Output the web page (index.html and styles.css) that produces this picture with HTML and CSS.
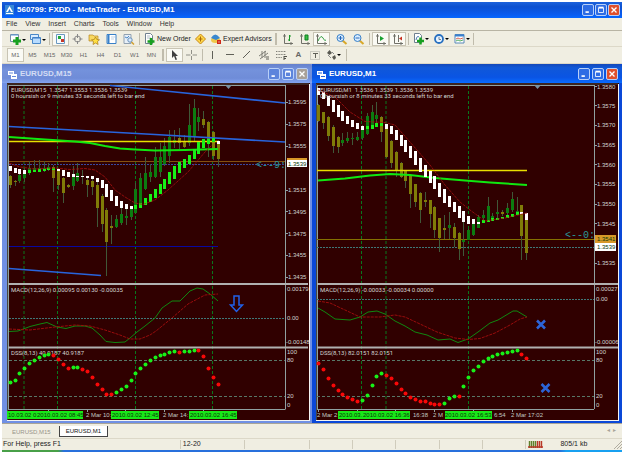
FILE: index.html
```html
<!DOCTYPE html>
<html lang="en">
<head>
<meta charset="utf-8">
<title>560799: FXDD - MetaTrader - EURUSD,M1</title>
<link rel="stylesheet" href="styles.css">
</head>
<body>
<div class="app">
  <header class="titlebar">
    <svg class="logo" viewBox="0 0 9 10"><path class="logo-bg" d="M0 0h9v10H0z"/><path d="M4.500 1L8 7H1z" fill="#fff"/><path d="M4.500 4L6 7H3z" fill="#2a78d8"/><path d="M1 8.500h7" stroke="#fff"/></svg>
    <h1>560799: FXDD - MetaTrader - EURUSD,M1</h1>
    <div class="winbtns">
      <button aria-label="Minimize"><svg viewBox="0 0 12 12"><path d="M3 8.500h4" stroke="#fff" stroke-width="2"/></svg></button>
      <button aria-label="Maximize"><svg viewBox="0 0 12 12"><path d="M3 3.500h6v5.500H3z" fill="none" stroke="#fff"/><path d="M3 3h6" stroke="#fff" stroke-width="2"/></svg></button>
      <button class="close" aria-label="Close"><svg viewBox="0 0 12 12"><path d="M3 3l6 6M9 3l-6 6" stroke="#fff" stroke-width="1.600"/></svg></button>
    </div>
  </header>
  <nav class="menu">
    <a href="#">File</a><a href="#">View</a><a href="#">Insert</a><a href="#">Charts</a><a href="#">Tools</a><a href="#">Window</a><a href="#">Help</a>
  </nav>
  <div class="toolbar">
    <button class="drop" aria-label="New chart"><svg viewBox="0 0 20 14"><path d="M3.500 2.500h8v7h-8z" fill="#fff" stroke="#7890a8"/><path d="M4 3h7" stroke="#5a9ad8"/><path d="M10 5v8M6 9h8" stroke="#18a020" stroke-width="3"/><path d="M15 7h4l-2 2z"/></svg></button>
    <button class="drop" aria-label="Profiles"><svg viewBox="0 0 20 14"><path d="M3.500 2.500h8v5h-8z" fill="#d8ecff" stroke="#4a88c8"/><path d="M5.500 5.500h8v6h-8z" fill="#b8dcff" stroke="#4a88c8"/><path d="M6 6h7" stroke="#3878c8"/><path d="M15 7h4l-2 2z"/></svg></button>
    <i class="sep"></i>
    <button class="on" aria-label="Market watch"><svg viewBox="0 0 17 14"><path d="M4.500 2.500h8v9h-8z" fill="#f4faff" stroke="#6a98c0"/><path d="M6 4h3v3H6z" fill="#20a838"/><path d="M9 7h3v3H9z" fill="#c83828"/></svg></button>
    <button aria-label="Data window"><svg viewBox="0 0 17 14"><circle cx="8.500" cy="7" r="3" fill="none" stroke="#888"/><path d="M8.500 2v10M3.500 7h10" stroke="#888"/><path d="M7 6h3v3H7z" fill="#f0eee2"/></svg></button>
    <button aria-label="Navigator"><svg viewBox="0 0 17 14"><path d="M3 3h4l1 1h4v5H3z" fill="#f8d860" stroke="#b88820" stroke-width=".7"/><path d="M9.500 5l1.300 2.500 2.700.3-2 1.800.6 2.900-2.600-1.500L7 12.500l.5-2.900-2-1.800 2.700-.3z" fill="#ffe040" stroke="#a87818" stroke-width=".7"/></svg></button>
    <button aria-label="Terminal"><svg viewBox="0 0 17 14"><path d="M4 2.500h9v9H4z" fill="#fff" stroke="#3880c8"/><path d="M5.500 3v8" stroke="#3880c8" stroke-width="2"/><path d="M8 5h4M8 7h3" stroke="#a8c0d8" stroke-width=".7"/></svg></button>
    <button aria-label="Strategy tester"><svg viewBox="0 0 17 14"><path d="M4 2.500h7v9H4z" fill="#e8f0f8" stroke="#90a0b0"/><path d="M5 5l2 1 2-2" fill="none" stroke="#4a88c8"/><circle cx="10" cy="8" r="2.200" fill="#d8eaff" stroke="#6890b8"/><path d="M11.500 10l2.500 2.500" stroke="#d0a030" stroke-width="1.500"/></svg></button>
    <i class="sep"></i>
    <button class="wide order"><svg viewBox="0 0 12 14"><path d="M2.500 1.500h5l2 2v8h-7z" fill="#fff" stroke="#708090"/><path d="M4 4h3M4 6h4" stroke="#90a0b0" stroke-width=".7"/><path d="M8 6v7M4.500 9.500h7" stroke="#18a020" stroke-width="2.500"/></svg>New Order</button>
    <button aria-label="MetaEditor"><svg viewBox="0 0 17 14"><path d="M8.500 2l5 5-5 5-5-5z" fill="#ffd848" stroke="#c88818"/><path d="M8.500 4.500v5M6.500 7h4" stroke="#a86808"/></svg></button>
    <button class="wide expert"><svg viewBox="0 0 12 14"><ellipse cx="5.500" cy="8" rx="4.500" ry="3" fill="#f0c848"/><path d="M1 6q4-7 9 0l-4 2z" fill="#3888d0"/><path d="M7 8h4v4H7z" fill="#d02818"/><path d="M8.500 9.500h1v1h-1z" fill="#fff"/></svg>Expert Advisors</button>
    <i class="sep grip"></i>
    <button aria-label="Bar chart"><svg viewBox="0 0 17 14"><path d="M5.500 2v9.500H14M4 4h3M12 10v3" fill="none" stroke="#707068"/><path d="M10.500 3v6M9 8h1.500M10.500 4H12" stroke="#189828" fill="none"/></svg></button>
    <button aria-label="Candlesticks"><svg viewBox="0 0 17 14"><path d="M5.500 2v9.500H14M4 4h3M12 10v3" fill="none" stroke="#707068"/><path d="M9 3h3v5H9z" fill="#38c048" stroke="#108020"/></svg></button>
    <button class="on" aria-label="Line chart"><svg viewBox="0 0 17 14"><path d="M4.500 2v9.500H14M3 4h3M12 10v3" fill="none" stroke="#707068"/><path d="M5 9q3-7 5-3t3 2" fill="none" stroke="#38a048"/></svg></button>
    <i class="gap"></i>
    <button aria-label="Zoom in"><svg viewBox="0 0 17 14"><path d="M9 8l4.500 4" stroke="#d8a828" stroke-width="2"/><circle cx="7.500" cy="6" r="3.500" fill="#d8ecff" stroke="#3880c8"/><path d="M7.500 4v4M5.500 6h4" stroke="#2868b8"/></svg></button>
    <button aria-label="Zoom out"><svg viewBox="0 0 17 14"><path d="M9 8l4.500 4" stroke="#d8a828" stroke-width="2"/><circle cx="7.500" cy="6" r="3.500" fill="#d8ecff" stroke="#3880c8"/><path d="M5.500 6h4" stroke="#2868b8"/></svg></button>
    <i class="sep"></i>
    <button class="on" aria-label="Auto scroll"><svg viewBox="0 0 17 14"><path d="M5.500 2v9.500H14M4 4h3M12 10v3" fill="none" stroke="#707068"/><path d="M8 4l4 2.500L8 9z" fill="#18a030"/></svg></button>
    <button class="on" aria-label="Chart shift"><svg viewBox="0 0 17 14"><path d="M5.500 2v9.500H14M4 4h3M12 10v3M9.500 3v7" fill="none" stroke="#707068"/><path d="M13 4.500L10 6.500l3 2z" fill="#c83020"/></svg></button>
    <i class="sep"></i>
    <button class="drop" aria-label="Indicators"><svg viewBox="0 0 20 14"><path d="M3.500 1.500h5l2 2v7h-7z" fill="#fff" stroke="#708090"/><path d="M5 8q1-5 3-3" fill="none" stroke="#4878b0"/><path d="M9.500 5.500v7M6 9h7" stroke="#18a020" stroke-width="2.500"/><path d="M14 6h4l-2 2z"/></svg></button>
    <button class="drop" aria-label="Periods"><svg viewBox="0 0 20 14"><circle cx="8" cy="7" r="4" fill="#e8f4ff" stroke="#2870c0" stroke-width="1.800"/><path d="M8 5v2.500h2" fill="none" stroke="#506880" stroke-width=".8"/><path d="M14 6h4l-2 2z"/></svg></button>
    <button class="drop" aria-label="Templates"><svg viewBox="0 0 20 14"><path d="M4 2.500h9v8.500H4z" fill="#fff" stroke="#5888b8"/><path d="M4 3.500h9" stroke="#3880d0" stroke-width="2"/><path d="M5 7l2-1 2 1 3-1" fill="none" stroke="#c83828" stroke-width=".8"/><path d="M5 9l2-1 2 1 3-1" fill="none" stroke="#289838" stroke-width=".8"/><path d="M15 6h4l-2 2z"/></svg></button>
    <i class="sep"></i>
  </div>
  <div class="toolbar periods">
    <button class="on">M1</button><button>M5</button><button>M15</button><button>M30</button><button>H1</button><button>H4</button><button>D1</button><button>W1</button><button>MN</button>
    <i class="sep grip"></i>
    <button class="on" aria-label="Cursor"><svg viewBox="0 0 17 14"><path d="M6 2v8l2-2 1.500 4 1.500-.6L9.600 8H12z" fill="#404040"/></svg></button>
    <button aria-label="Crosshair"><svg viewBox="0 0 17 14"><path d="M8.500 2v4M8.500 8v4M3 7h4.500M9.500 7H14" stroke="#909088"/></svg></button>
    <i class="sep"></i>
    <button aria-label="Vertical line"><svg viewBox="0 0 17 14"><path d="M7.500 3v8" stroke="#606058"/></svg></button>
    <button aria-label="Horizontal line"><svg viewBox="0 0 17 14"><path d="M4 6.500h8" stroke="#606058"/></svg></button>
    <button aria-label="Trendline"><svg viewBox="0 0 17 14"><path d="M4 10l7-7" stroke="#606058"/></svg></button>
    <button aria-label="Channel"><svg viewBox="0 0 17 14"><path d="M3 8l7-5M4 11l8-6M6 3v7M9 3v7" stroke="#808078"/><path d="M10 9h3M10 11h3" stroke="#606058"/></svg></button>
    <button aria-label="Fibonacci"><svg viewBox="0 0 17 14"><path d="M3 3.500h10M3 6.500h10M3 9.500h6" stroke="#808078" stroke-dasharray="1 .6"/><path d="M11 8v4M11 8.500h3M11 10.500h2" stroke="#505048"/></svg></button>
    <button class="glyph">A</button>
    <button aria-label="Text label"><svg viewBox="0 0 17 14"><path d="M3.500 3.500h9v8h-9z" fill="none" stroke="#a8a8a0" stroke-dasharray="1 1"/><path d="M6 5.500h5M8.500 5.500V10" stroke="#606058"/></svg></button>
    <button class="drop" aria-label="Arrows"><svg viewBox="0 0 20 14"><path d="M3 5l2.500-3L8 5 5.500 7zM8 9l3-2 1 3-2 2z" fill="#585850"/><path d="M8 4l2 2M4 7l3 3" stroke="#888"/><path d="M13 6h4l-2 2z"/></svg></button>
    <i class="sep"></i>
  </div>

  <main class="mdi">
    <section class="window inactive">
      <header>
        <svg class="chip" viewBox="0 0 9 9"><path d="M0 1h6v4H0zM3 4h6v5H3z" fill="#fff"/><path d="M1 3h4M4 6.500h4" stroke="#6488d8"/></svg>
        <h2>EURUSD,M15</h2>
        <div class="winbtns">
          <button aria-label="Minimize"><svg viewBox="0 0 12 12"><path d="M3 8.500h4" stroke="#fff" stroke-width="2"/></svg></button>
          <button aria-label="Maximize"><svg viewBox="0 0 12 12"><path d="M3 3.500h6v5.500H3z" fill="none" stroke="#fff"/><path d="M3 3h6" stroke="#fff" stroke-width="2"/></svg></button>
          <button class="close" aria-label="Close"><svg viewBox="0 0 12 12"><path d="M3 3l6 6M9 3l-6 6" stroke="#fff" stroke-width="1.600"/></svg></button>
        </div>
      </header>
      <svg class="chart" viewBox="7 83 303 338" role="img" aria-label="EURUSD M15 chart">
        <path class="bg" d="M7 83h303v338H7z"/>
        <path class="edge" d="M7 84h302M7.500 84v336"/>
        <path class="axis" d="M9 85.500h276.500M8.500 85v325M285.500 85v324M9 409.500h276.500M48.500 409v3M87.500 409v3M125.500 409v3M164.500 409v3M203.500 409v3"/>
        <path class="grid" d="M24 86v323M57.500 86v323M135.500 86v323M212.500 86v323"/>
        <path class="price-dim" d="M9 161.500h276"/>
        <path class="bid-blue" d="M9 164.500h276"/>
        <path class="navy" d="M9 246.500h209"/>
        <g data-candles="left"></g>
        <path class="yellow" d="M9 141.500h209"/>
        <path class="trend" d="M110 85.500L160 90.500L285 103M9 126.500L155 134.500L285 142M9 268.500L101 275.500"/>
        <polyline class="ma" points="9,137 45,139.500 75,141.500 90,143 105,146 120,148.500 135,149.500 155,150.500 185,150 218,149"/>
        <g data-blocks="left"></g>
        <polyline class="red" points="9,163 20,167 35,169 55,168 70,169.500 85,168.500 95,170 105,177 115,190 125,197 135,203 143,204.500 155,200 168,190 188,172 205,152 212,145"/>
        <path class="marker" d="M225 85h7l-3.500 4z"/>
        <text class="count" x="256" y="168">&lt;--9:</text>
        <path class="bg" d="M286 86h22v320h-22z"/>
        <path class="axis" d="M285.500 85v324M286 102.500h2M286 124.500h2M286 146.500h2M286 190.500h2M286 211.500h2M286 233.500h2M286 255.500h2M286 277.500h2"/>
        <path class="gold" d="M287 158h20v3h-20z"/><path class="white" d="M287 160h20v7h-20z"/>
        <g class="lbl">
          <text x="11" y="92">EURUSD,M15&#160; 1.3547 1.3553 1.3536 1.3539</text>
          <text x="11" y="98">0 hoursish or 9 minutes 33 seconds left to bar end</text>
        </g>
        <g class="num">
          <text x="288" y="104">1.3595</text><text x="288" y="126">1.3575</text><text x="288" y="148">1.3555</text>
          <text class="dark" x="288" y="166">1.3539</text>
          <text x="288" y="192">1.3515</text><text x="288" y="214">1.3495</text><text x="288" y="236">1.3475</text><text x="288" y="257">1.3455</text><text x="288" y="279">1.3435</text>
          <text x="287" y="291">0.00179</text><text x="287" y="320">0.00</text><text x="286" y="344">-0.00148</text>
          <text x="287" y="354">100</text><text x="287" y="362">80</text><text x="287" y="398">20</text><text x="287" y="407">0</text>
        </g>
        <path class="zero" d="M9 318.500h276"/>
        <path class="level" d="M9 360.500h276M9 396.500h276"/>
        <path class="split" d="M8 284h300M8 347.500h300"/>
        <polyline class="macd" points="9,331.500 18,331 30,326.500 40,324 47,322.500 57,327 66,328.500 75,326 85,326 92,328 100,335 106,341.500 115,342.500 125,342 130,338 137,332 145,326 155,318 162,308 172,301 180,301 183,298 190,291 197,288 203,289 210,294 218,301"/>
        <polyline class="signal" points="9,329 30,330 55,327 75,325 90,326 105,330 120,335 130,339 140,339 150,335 156,331 172,318 188,304 205,295 218,294"/>
        <g class="lbl"><text x="11" y="292">MACD(12,26,9) 0.00095 0.00130 -0.00035</text><text x="11" y="355">DSS(8,13) 40.9187 40.9187</text></g>
        <g data-dots="left"></g>
        <path class="arrow" d="M234 296h5v9h3.500l-6 6.500-6-6.500h3.500z"/>
        <path class="stamp" d="M7 411h76v8H7zM111 411h48v8h-48zM189 411h48v8h-48z"/>
        <g class="time"><text class="dark" x="8" y="417">10.03.02 0</text><text class="dark" x="37" y="417">2010.03.02 08:45</text><text x="86" y="417">2 Mar 10:</text><text class="dark" x="112" y="417">2010.03.02 12:45</text><text x="163" y="417">2 Mar 14:</text><text class="dark" x="190" y="417">2010.03.02 16:45</text></g>
        <path class="rim" d="M309.500 84v337M7 420.500h303"/>
      </svg>
    </section>

    <section class="window">
      <header>
        <svg class="chip" viewBox="0 0 9 9"><path d="M0 1h6v4H0zM3 4h6v5H3z" fill="#fff"/><path d="M1 3h4M4 6.500h4" stroke="#2060d8"/></svg>
        <h2>EURUSD,M1</h2>
        <div class="winbtns">
          <button aria-label="Minimize"><svg viewBox="0 0 12 12"><path d="M3 8.500h4" stroke="#fff" stroke-width="2"/></svg></button>
          <button aria-label="Maximize"><svg viewBox="0 0 12 12"><path d="M3 3.500h6v5.500H3z" fill="none" stroke="#fff"/><path d="M3 3h6" stroke="#fff" stroke-width="2"/></svg></button>
          <button class="close" aria-label="Close"><svg viewBox="0 0 12 12"><path d="M3 3l6 6M9 3l-6 6" stroke="#fff" stroke-width="1.600"/></svg></button>
        </div>
      </header>
      <svg class="chart" viewBox="316 83 303 338" role="img" aria-label="EURUSD M1 chart">
        <path class="bg" d="M316 83h303v338H316z"/>
        <path class="edge" d="M316 84h302M316.500 84v336"/>
        <path class="axis" d="M317 85.500h277M317.500 85v325M594.500 85v324M317 409.500h277M318.500 409v3M357.500 409v3M395.500 409v3M434.500 409v3M473.500 409v3M512.500 409v3"/>
        <path class="grid" d="M361.500 86v323M386 86v323M468.500 86v323"/>
        <path class="price-olive" d="M317 239.500h277"/>
        <path class="zero" d="M317 247.500h277M317 299.500h277"/>
        <g data-candles="right"></g>
        <path class="yellow" d="M317 170.500h210"/>
        <polyline class="ma" points="318,180.500 345,178.500 370,175.500 390,174 410,175 435,178 465,180.500 490,182.500 527,185"/>
        <g data-blocks="right"></g>
        <polyline class="red" points="318,90 335,97 350,112 365,121.500 385,122.500 395,125 410,142 430,165 445,185 460,202 470,210 485,221 505,218 527,213"/>
        <path class="marker" d="M534 85h7l-3.500 4z"/>
        <text class="count" x="565" y="238">&lt;--0:</text>
        <path class="bg" d="M595 86h22v320h-22z"/>
        <path class="axis" d="M594.500 85v324M595 86.500h2M595 105.500h2M595 125.500h2M595 145.500h2M595 164.500h2M595 184.500h2M595 204.500h2M595 223.500h2M595 263.500h2"/>
        <path class="gold" d="M595 235h21v8h-21z"/><path class="white" d="M595 243h21v8h-21z"/>
        <g class="lbl">
          <text x="320" y="92">EURUSD,M1&#160; 1.3536 1.3539 1.3536 1.3539</text>
          <text x="320" y="98">0 hoursish or 8 minutes 33 seconds left to bar end</text>
        </g>
        <g class="num">
          <text x="597" y="89">1.3580</text><text x="597" y="108">1.3575</text><text x="597" y="127">1.3570</text><text x="597" y="147">1.3565</text><text x="597" y="167">1.3560</text><text x="597" y="186">1.3555</text><text x="597" y="206">1.3550</text><text x="597" y="226">1.3545</text>
          <text class="dark" x="597" y="241">1.3541</text><text class="dark" x="597" y="249">1.3539</text><text x="597" y="265">1.3535</text>
          <text x="596" y="291">0.00027</text><text x="596" y="301">0.00</text><text x="595" y="344">-0.00006</text>
          <text x="596" y="354">100</text><text x="596" y="362">80</text><text x="596" y="398">20</text><text x="596" y="407">0</text>
        </g>
        <path class="level" d="M317 360.500h277M317 396.500h277"/>
        <path class="split" d="M317 284h301M317 347.500h301"/>
        <polyline class="macd" points="318,308 325,312 335,319 350,320 360,317 368,312 377,311 385,314 395,321 405,326 415,332 427,335 438,340 450,339 458,342.500 468,339 478,332 490,323 498,320 513,311 517,311 527,317"/>
        <polyline class="signal" points="318,301 330,303 345,310 360,317 380,317 395,315 405,317 420,324 437,332 455,338 468,339.500 480,338.500 495,333 510,325 520,319 527,317"/>
        <g class="lbl"><text x="320" y="292">MACD(12,26,9) -0.00033 -0.00034 0.00000</text><text x="320" y="355">DSS(8,13) 82.0151 82.0151</text></g>
        <g data-dots="right"></g>
        <path class="cross" d="M537 320.500l8 8M545 320.500l-8 8M541.500 384l8 8M549.500 384l-8 8"/>
        <path class="stamp" d="M338 411h72v8h-72zM445 411h47v8h-47z"/>
        <g class="time"><text x="317" y="417">2 Mar 2</text><text class="dark" x="339" y="417">2010.03.</text><text class="dark" x="363" y="417">2010.03.02 16:36</text><text x="413" y="417">16:38</text><text x="433" y="417">2 M</text><text class="dark" x="445" y="417">2010.03.02 16:53</text><text x="494" y="417">6:54</text><text x="511" y="417">2 Mar 17:02</text></g>
        <path class="rim" d="M618.500 84v337M316 420.500h303"/>
      </svg>
    </section>
  </main>

  <div class="tabs"><button>EURUSD,M15</button><button class="active">EURUSD,M1</button><span>◂ &#160;▸</span></div>
  <footer class="status">
    <span class="help">For Help, press F1</span><span class="profile">12-20</span><span class="profile"></span><span></span><span></span><span></span><span></span><span></span>
    <span class="net"><svg viewBox="0 0 15 9"><path d="M1.500 1v7M3.500 1v7M5.500 1v7M7.500 1v7" stroke="#60802c" stroke-width="1.400"/><path d="M9.500 1v7M11.500 1v7M13.500 1v7M0 7h15" stroke="#b83828" stroke-width="1.400"/></svg>805/1 kb</span>
    <svg class="corner" viewBox="0 0 9 9"><path d="M1 9l8-8M4 9l5-5M7 9l2-2" stroke="#b0aca0"/></svg>
  </footer>
  <div class="taskbar"></div>
</div>
<script src="chart.js"></script>
</body>
</html>
```
FILE: chart.js
```js
// Each candle: colour, high, open/close top, open/close bottom, low.
const charts = {
  left: {
    start: 9.7,
    candles: `o 175 176 185 188|o 180 181 182 186|g 174 175 181 183|g 168 171 178 182|g 161 168 172 175|g 160 168 172 172|g 160 168 170 171|g 161 168 170 172|g 163 167 169 171|o 165 167 178 192|o 168 171 185 190|o 177 178 193 203|o 184 185 187 188|g 166 177 186 190|g 163 173 181 182|o 170 176 177 184|o 176 180 185 197|o 176 181 187 195|o 180 185 208 227|o 194 196 224 232|o 208 210 242 276|o 215 226 228 244|g 215 219 227 228|g 205 214 223 225|g 205 216 218 225|g 208 209 217 220|g 183 189 213 214|g 173 178 207 207|g 157 173 189 190|g 164 172 177 182|g 147 157 177 178|g 143 157 172 177|g 138 146 164 166|g 130 137 156 163|g 130 140 143 148|o 128 138 143 149|o 135 142 147 148|g 104 125 143 146|g 99 108 137 142|g 108 117 122 131|o 111 119 125 128|o 121 122 143 157|o 131 132 156 160|o 140 141 159 167`,
    blocks: `w 166 171|w 168 173|w 169 174|w 170 174|l 170 173|l 170 172|l 169 172|l 169 171|l 168 170|l 168 170|w 169 171|w 170 176|w 172 177|w 174 177|w 176 177|w 176 177|w 176 178|w 176 179|w 178 182|w 180 188|w 184 197|w 190 201|w 196 206|w 201 208|w 204 209|w 206 209|l 205 209|l 203 208|l 198 205|l 194 202|l 189 198|l 184 194|l 179 189|l 172 184|l 166 179|l 162 173|l 159 168|l 155 164|l 149 159|l 142 154|l 139 148|l 139 144|l 138 142|w 141 144`,
    dots: `l 382|l 380|l 373|l 368|l 363|l 360|l 357|l 355|l 354|r 355|r 359|r 364|r 368|l 367|l 367|r 369|r 371|r 377|r 384|r 389|r 394|r 394|l 392|l 389|l 386|l 380|l 373|l 368|l 364|l 360|l 357|l 355|l 354|l 352|l 351|r 352|l 351|l 351|l 350|r 350|r 356|r 368|r 377|r 384`
  },
  right: {
    start: 318.3,
    candles: `o 104 105 121 122|o 112 112 123 129|o 116 117 136 141|o 125 127 146 153|o 136 137 147 153|g 133 140 143 146|g 132 138 141 143|g 133 138 139 145|g 132 137 140 141|g 125 130 138 140|g 113 116 134 135|g 105 112 126 127|g 102 115 119 123|o 116 117 132 142|o 124 128 157 158|o 140 141 163 168|o 151 152 171 177|o 162 163 177 178|o 170 171 181 188|o 175 175 194 208|o 184 184 202 207|o 192 193 210 223|o 192 200 202 207|o 200 200 214 228|o 206 207 230 238|o 218 218 238 252|o 215 228 230 239|g 212 225 228 239|o 223 227 238 247|o 232 233 249 260|g 222 240 242 256|g 229 230 240 240|g 223 223 235 236|g 215 217 228 228|g 210 215 218 222|g 197 206 221 222|g 213 216 219 220|g 200 212 214 219|o 210 212 214 216|g 203 208 213 215|g 192 199 210 212|g 197 211 213 214|o 205 205 236 260|o 213 220 253 260`,
    blocks: `w 88 95|w 92 99|w 96 106|w 100 112|w 105 117|w 111 121|w 116 124|w 120 127|w 123 129|w 126 130|l 126 129|l 125 129|l 123 127|l 123 126|w 124 129|w 126 134|w 130 140|w 135 146|w 140 152|w 146 158|w 151 165|w 158 172|w 165 177|w 171 183|w 176 189|w 183 197|w 189 203|w 196 207|w 202 212|w 206 218|w 211 222|w 216 224|w 219 224|w 222 224|l 220 223|l 220 222|l 218 221|l 218 220|l 217 219|l 215 218|l 214 217|l 212 215|w 212 214|w 213 220`,
    dots: `r 363|r 369|r 378|r 385|r 390|r 394|r 397|r 399|r 401|l 400|l 395|l 385|l 376|l 373|r 375|r 378|r 383|r 389|r 393|r 397|r 399|r 401|r 401|r 403|r 404|r 404|l 403|l 398|l 396|r 396|l 386|l 377|l 370|l 366|l 361|l 358|l 356|l 354|l 353|l 352|l 351|l 350|r 354|r 358`
  }
};

const step = 4.837;
const parse = text => text.split('|').map(row => {
  const [kind, ...values] = row.split(' ');
  return [kind, ...values.map(Number)];
});

for (const [name, chart] of Object.entries(charts)) {
  const x = i => Math.round(chart.start + step * i) + 0.5;
  const group = kind => document.querySelector(`[data-${kind}="${name}"]`);

  group('candles').innerHTML = parse(chart.candles).map(([k, high, top, bottom, low], i) =>
    `<path class="wick" d="M${x(i)} ${high}V${low}"/><rect class="${k}" x="${x(i) - 1.5}" y="${top}" width="3" height="${bottom - top}"/>`
  ).join('');

  group('blocks').innerHTML = parse(chart.blocks).map(([k, top, bottom], i) =>
    `<rect class="${k}" x="${x(i) - 1.5}" y="${top}" width="3" height="${bottom - top}"/>`
  ).join('');

  group('dots').innerHTML = parse(chart.dots).map(([k, y], i) =>
    `<circle class="${k}" cx="${x(i)}" cy="${y + 0.5}" r="2"/>`
  ).join('');
}
```
FILE: styles.css
```css
* { box-sizing: border-box; }
body {
  margin: 0;
  padding: 2px 3px 0 2px;
  background: #fff;
  color: #222;
  font-family: "Liberation Sans", Arial, sans-serif;
  font-size: 7px;
  line-height: 8px;
}
.app { background: #f0eee2; }
svg { display: block; }
button { margin: 0; padding: 0; border: 0; background: none; color: inherit; font: inherit; }
h1, h2 { margin: 0; flex: 1; font-weight: bold; font-size: 8px; line-height: 12px; color: #fff; }

.titlebar {
  display: flex;
  align-items: center;
  height: 16px;
  padding: 0 2px 0 3px;
  gap: 3px;
  background: linear-gradient(#1c62dc, #0c50d0 30%, #0a5cf0 80%, #0668ff);
}
.logo { width: 9px; height: 10px; }
.logo-bg { fill: #3888d8; }
.winbtns { display: flex; gap: 1px; }
.winbtns button { width: 12px; height: 12px; border: 1px solid #b8d0f8; border-radius: 2px; background: #2e6ce4; }
.winbtns svg { width: 10px; height: 10px; }
.winbtns .close { background: #e0502c; }

.menu { display: flex; gap: 8px; height: 13px; padding: 2px 4px; border-bottom: 1px solid #b8b4a4; }
.menu a { color: #333; text-decoration: none; }

.toolbar { display: flex; align-items: center; height: 16px; padding-left: 5px; border-bottom: 1px solid #dcd8c8; }
.toolbar button { flex: none; width: 17px; height: 14px; }
.toolbar button svg { width: 17px; height: 14px; }
.toolbar .drop, .toolbar .drop svg { width: 20px; }
.toolbar .on { background: #fafaf4; box-shadow: inset 0 0 0 1px #c8c4b4; }
.toolbar .wide { display: flex; align-items: center; gap: 2px; white-space: nowrap; color: #222; }
.toolbar .wide svg { flex: none; width: 12px; }
.toolbar .order { width: 50px; padding-left: 1px; }
.toolbar .expert { width: 64px; padding-left: 1px; gap: 1px; }
.sep { flex: none; width: 1px; height: 12px; margin: 0 2px; background: #c0bcac; }
.sep.grip { width: 2px; }
.gap { width: 3px; }
.periods { height: 17px; color: #666; font-size: 6px; }
.periods .glyph { font-size: 8px; font-weight: bold; }

.mdi { display: grid; grid-template-columns: 1fr 1fr; }
.window { padding: 0 3px 2px 4px; background: #0a48d8; }
.window header {
  display: flex;
  align-items: center;
  height: 19px;
  margin: 0 -3px 0 -4px;
  padding: 1px 4px 0 5px;
  gap: 3px;
  border-radius: 3px 3px 0 0;
  background: linear-gradient(#1448b8, #1058d8 20%, #0a54e4 70%, #0a6cff);
}
.window .winbtns { gap: 2px; }
.window.inactive { padding: 0 2px 2px 5px; background: #7090e4; }
.window.inactive header { margin: 0 -2px 0 -5px; padding-left: 6px; background: linear-gradient(#6480cc, #7492dc 30%, #6f8cd8 75%, #84a4f0); }
.window.inactive h2 { color: #d4dcf4; }
.window.inactive .winbtns button { background: #5c84dc; }
.window.inactive .winbtns .close { background: #a8a098; }
.chip { width: 9px; height: 9px; }

.chart { width: 100%; height: auto; font-size: 6px; }
.bg { fill: #300000; }
.edge { fill: none; stroke: #484840; }
.axis { fill: none; stroke: #90a0a0; }
.rim { fill: none; stroke: #f4f4f4; }
.split { stroke: #b0b0b0; stroke-width: 2; }
.grid { stroke: #08781c; stroke-dasharray: 3 2; }
.price-dim { stroke: #845010; }
.price-olive { stroke: #847000; }
.bid-blue { stroke: #3848a0; stroke-dasharray: 2 1; }
.navy { stroke: #0808a0; }
.yellow { stroke: #e8e000; stroke-width: 1.5; }
.trend { fill: none; stroke: #2864dc; stroke-width: 1.6; }
.ma { fill: none; stroke: #10e810; stroke-width: 2; }
.red { fill: none; stroke: #a81010; stroke-width: .8; stroke-dasharray: 3 1; }
.zero { stroke: #407878; stroke-dasharray: 2 1; }
.level { stroke: #587868; stroke-dasharray: 3 2; }
.macd { fill: none; stroke: #108810; }
.signal { fill: none; stroke: #980c0c; stroke-dasharray: 3 1; }
.wick { stroke: #405838; }
.o { fill: #807c08; }
.g { fill: #0c7c10; }
.w { fill: #fff; }
.l { fill: #18f018; }
.r { fill: #f80808; }
.marker { fill: #7890a0; }
.gold { fill: #d89828; }
.white { fill: #fff; }
.stamp { fill: #18e818; }
.arrow { fill: none; stroke: #2060e8; stroke-width: 1.5; }
.cross { stroke: #2c64d8; stroke-width: 2.6; }
.lbl, .num { fill: #d0d4d0; }
.lbl { font-family: Roboto, "Liberation Sans", sans-serif; }
.time { fill: #c0c8c0; }
.dark { fill: #083808; }
.count { fill: #289898; font-family: "Liberation Mono", monospace; font-size: 10px; }

.tabs { display: flex; align-items: flex-start; height: 15px; padding: 2px 6px 0 2px; border-top: 1px solid #a8a498; font-size: 6px; }
.tabs button { height: 11px; padding: 0 8px; color: #98948a; }
.tabs .active { padding: 0 6px; border: 1px solid #444; border-top: 0; background: #fff; color: #111; }
.tabs span { margin-left: auto; color: #a8a498; }
.status { display: flex; height: 12px; align-items: center; border-top: 1px solid #dcd8c8; }
.status span { flex: 42; height: 9px; padding-left: 2px; border-left: 1px solid #d0ccbc; white-space: nowrap; }
.status .help { flex: 184; padding-left: 1px; border: 0; }
.status .profile { flex: 64; }
.status .net { display: flex; flex: 88; gap: 17px; }
.net svg { flex: none; width: 15px; height: 9px; }
.corner { width: 9px; height: 9px; }
.taskbar { height: 3px; background: linear-gradient(90deg, #48a048 0, #48a048 9%, #2870dc 10%, #2870dc 90%, #18a0f0 91%); }
```
